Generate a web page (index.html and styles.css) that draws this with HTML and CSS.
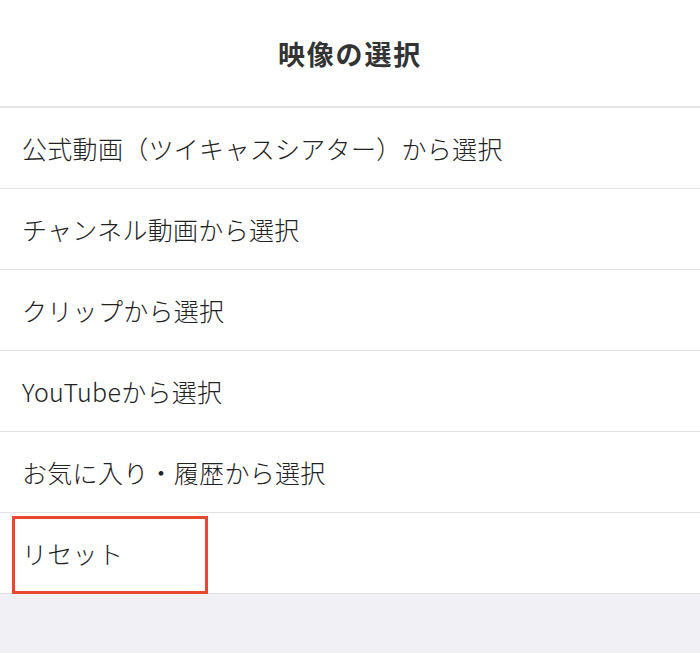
FILE: index.html
```html
<!DOCTYPE html>
<html lang="ja">
<head>
<meta charset="utf-8">
<link rel="stylesheet" href="styles.css">
</head>
<body>
<div class="sheet">
  <div class="header">映像の選択</div>
  <ul class="list">
    <li class="row">公式動画（ツイキャスシアター）から選択</li>
    <li class="row">チャンネル動画から選択</li>
    <li class="row">クリップから選択</li>
    <li class="row">YouTubeから選択</li>
    <li class="row">お気に入り・履歴から選択</li>
    <li class="row reset">リセット<span class="highlight"></span></li>
  </ul>
</div>
</body>
</html>
```
FILE: styles.css
```css
html, body {
  margin: 0;
  padding: 0;
  background: #f0f0f5;
  font-family: "Noto Sans CJK JP", "Noto Sans", sans-serif;
}
.sheet {
  background: #ffffff;
}
.header {
  height: 106px;
  border-bottom: 2px solid #e6e6e6;
  display: flex;
  align-items: center;
  justify-content: center;
  font-size: 27px;
  font-weight: 700;
  color: #333333;
  letter-spacing: 1.8px;
}
.list {
  list-style: none;
  margin: 0;
  padding: 0;
}
.row {
  height: 80px;
  border-bottom: 1px solid #e2e2e2;
  display: flex;
  align-items: center;
  padding-left: 22px;
  font-size: 25px;
  font-weight: 300;
  letter-spacing: 0.3px;
  color: #222222;
  position: relative;
}
.highlight {
  position: absolute;
  left: 12px;
  top: 3px;
  width: 190px;
  height: 72px;
  border: 3px solid #e8482e;
}
```
